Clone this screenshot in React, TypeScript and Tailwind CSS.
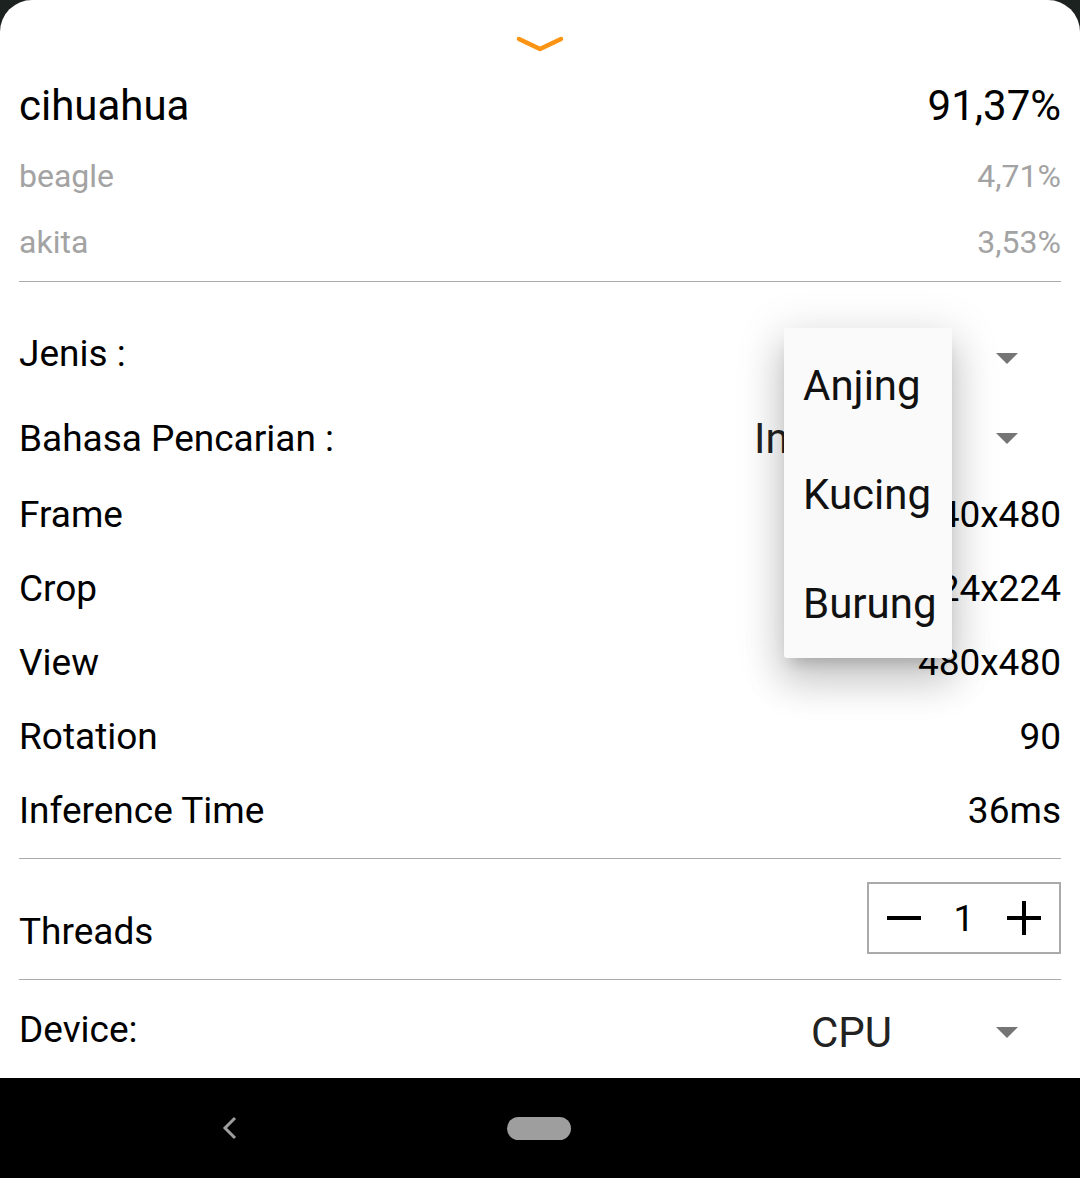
import React from "react";

type Pair = { label: string; value: string };

const stats: Pair[] = [
    { label: "Frame", value: "640x480" },
    { label: "Crop", value: "224x224" },
    { label: "View", value: "480x480" },
    { label: "Rotation", value: "90" },
    { label: "Inference Time", value: "36ms" },
];

const options = ["Anjing", "Kucing", "Burung"];

function Caret({ className = "" }: { className?: string }) {
    return (
        <svg width="22" height="11" viewBox="0 0 22 11" className={`shrink-0 ${className}`}>
            <path d="M0 0 H22 L11 11 Z" fill="#757575" />
        </svg>
    );
}

function StatRow({ label, value }: Pair) {
    return (
        <div className="flex h-[74px] items-center justify-between text-[37px] leading-none text-black">
            <span>{label}</span>
            <span>{value}</span>
        </div>
    );
}

export default function App() {
    return (
        <div className="flex h-[1178px] w-[1080px] flex-col bg-[#1b2220] font-[family-name:Roboto,sans-serif]">
            <div className="relative flex h-[1078px] flex-col rounded-t-[32px] bg-white px-[19px]">
                {/* handle */}
                <div className="flex h-[80px] justify-center pt-[36px]">
                    <svg width="48" height="16" viewBox="0 0 48 16">
                        <path
                            d="M3 3 L24 13 L45 3"
                            fill="none"
                            stroke="#fb9412"
                            strokeWidth="4.5"
                            strokeLinecap="round"
                            strokeLinejoin="round"
                        />
                    </svg>
                </div>

                {/* results */}
                <div className="flex h-[51px] items-center justify-between text-[42px] leading-none text-black">
                    <span>cihuahua</span>
                    <span>91,37%</span>
                </div>
                <div className="mt-[12px] flex h-[66px] items-center justify-between text-[32px] leading-none text-[#a3a3a3]">
                    <span>beagle</span>
                    <span>4,71%</span>
                </div>
                <div className="flex h-[66px] items-center justify-between text-[32px] leading-none text-[#a3a3a3]">
                    <span>akita</span>
                    <span>3,53%</span>
                </div>
                <div className="mt-[6px] h-px bg-[#aaaaaa]" />

                {/* spinners */}
                <div className="mt-[30px] flex h-[82px] items-center justify-between text-[37px] leading-none text-black">
                    <span>Jenis :</span>
                    <div className="flex w-[277px] items-center justify-end pr-[43px]">
                        <Caret className="mt-[10px]" />
                    </div>
                </div>
                <div className="flex h-[83px] items-center justify-between pt-[6px] text-[37px] leading-none text-black">
                    <span>Bahasa Pencarian :</span>
                    <div className="flex w-[307px] items-center justify-between pr-[43px]">
                        <span className="text-[42px] text-[#222]">Indonesia</span>
                        <Caret />
                    </div>
                </div>

                {stats.map((s) => (
                    <StatRow key={s.label} {...s} />
                ))}
                <div className="mt-[11px] h-px bg-[#aaaaaa]" />

                {/* threads */}
                <div className="flex items-start justify-between pt-[23px] pb-[25px]">
                    <span className="mt-[28px] text-[37px] leading-[44px] text-black">Threads</span>
                    <div className="flex h-[72px] w-[194px] items-center justify-between border-2 border-[#aaaaaa] px-[18px]">
                        <svg width="34" height="34" viewBox="0 0 34 34">
                            <rect x="0" y="15" width="34" height="4" fill="#000" />
                        </svg>
                        <span className="text-[37px] leading-none text-black">1</span>
                        <svg width="34" height="34" viewBox="0 0 34 34">
                            <rect x="0" y="15" width="34" height="4" fill="#000" />
                            <rect x="15" y="0" width="4" height="34" fill="#000" />
                        </svg>
                    </div>
                </div>
                <div className="h-px bg-[#aaaaaa]" />

                {/* device */}
                <div className="flex h-[98px] items-center justify-between text-[37px] leading-none text-black">
                    <span>Device:</span>
                    <div className="mt-[7px] flex w-[250px] items-center justify-between pr-[43px]">
                        <span className="text-[42px] text-[#222]">CPU</span>
                        <Caret />
                    </div>
                </div>

                {/* open spinner menu */}
                <div className="absolute top-[328px] left-[784px] w-[168px] rounded-[3px] bg-[#fafafa] pt-[3px] shadow-[0_24px_38px_3px_rgba(0,0,0,0.14),0_9px_46px_8px_rgba(0,0,0,0.10),0_11px_15px_-7px_rgba(0,0,0,0.2)]">
                    {options.map((o) => (
                        <div
                            key={o}
                            className="flex h-[109px] items-center pl-[19px] text-[42px] leading-none text-[#111]"
                        >
                            {o}
                        </div>
                    ))}
                </div>
            </div>

            {/* navigation bar */}
            <div className="flex h-[100px] items-center bg-black">
                <div className="flex w-[460px] justify-center">
                    <svg width="16" height="24" viewBox="0 0 16 24">
                        <path d="M13 2 L3 12 L13 22" fill="none" stroke="#9e9e9e" strokeWidth="3" />
                    </svg>
                </div>
                <div className="ml-[47px] h-[23px] w-[64px] rounded-full bg-[#9e9e9e]" />
            </div>
        </div>
    );
}
